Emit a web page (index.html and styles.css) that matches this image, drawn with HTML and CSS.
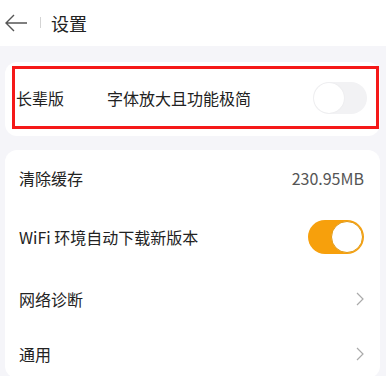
FILE: index.html
```html
<!DOCTYPE html>
<html lang="zh">
<head>
    <meta charset="UTF-8">
    <meta name="viewport" content="width=device-width, initial-scale=1.0">
    <title>设置</title>
    <link rel="stylesheet" href="styles.css">
</head>
<body>
    <div class="header">
        <svg class="back" width="24" height="18" viewBox="0 0 24 18">
            <path d="M10 1 L2 9 L10 17 M2 9 H23" fill="none" stroke="#555" stroke-width="1.4"/>
        </svg>
        <span class="sep"></span>
        <span class="title">设置</span>
    </div>

    <div class="page">
        <div class="card card-elder">
            <div class="elder-row">
                <span class="elder-name">长辈版</span>
                <span class="elder-desc">字体放大且功能极简</span>
                <span class="switch"><span class="knob"></span></span>
            </div>
        </div>

        <div class="card">
            <div class="row row-first">
                <span>清除缓存</span>
                <span class="value">230.95MB</span>
            </div>
            <div class="row">
                <span>WiFi 环境自动下载新版本</span>
                <span class="switch on"><span class="knob"></span></span>
            </div>
            <div class="row">
                <span>网络诊断</span>
                <svg class="chevron" width="8" height="14" viewBox="0 0 8 14">
                    <path d="M1 1 L7 7 L1 13" fill="none" stroke="#aaa" stroke-width="1.2"/>
                </svg>
            </div>
            <div class="row row-last">
                <span>通用</span>
                <svg class="chevron" width="8" height="14" viewBox="0 0 8 14">
                    <path d="M1 1 L7 7 L1 13" fill="none" stroke="#aaa" stroke-width="1.2"/>
                </svg>
            </div>
        </div>
    </div>
</body>
</html>
```

FILE: styles.css
```css
body {
    margin: 0;
    background-color: #f5f5f9;
    font-family: "Noto Sans CJK SC", "Noto Sans", sans-serif;
    color: #222;
    height: 376px;
    overflow: hidden;
}
.header {
    height: 45px;
    background-color: white;
    display: flex;
    align-items: center;
    padding-left: 4px;
    padding-bottom: 1px;
}
.back {
    display: block;
}
.sep {
    width: 1px;
    height: 11px;
    background-color: #d4d4d4;
    margin-left: 12px;
    margin-right: 10px;
}
.title {
    font-size: 18px;
    color: #222;
}
.page {
    padding: 0 6px 0 5px;
}
.card {
    background-color: white;
    border-radius: 12px;
    padding: 0 16px 0 14px;
    margin-top: 14px;
}
.card-elder {
    margin-top: 16px;
    padding: 4px 1px 7px 7px;
}
.elder-row {
    height: 57px;
    border: 3px solid #f51818;
    display: flex;
    align-items: center;
    font-size: 16px;
    padding: 0 9px 0 1px;
}
.elder-name {
    width: 91px;
}
.elder-desc {
    flex: 1;
}
.switch {
    width: 54px;
    height: 32px;
    border-radius: 16px;
    background-color: #f2f2f4;
    display: flex;
    align-items: center;
    box-sizing: border-box;
}
.switch .knob {
    width: 30px;
    height: 30px;
    border-radius: 50%;
    background-color: white;
    box-shadow: 0 0 2px rgba(0,0,0,0.06);
    margin-left: 1px;
}
.switch.on {
    width: 56px;
    height: 34px;
    border-radius: 17px;
    background-color: #f7a00c;
    justify-content: flex-end;
}
.switch.on .knob {
    width: 30px;
    height: 30px;
    border: 1.5px solid #e29a14;
    box-shadow: none;
    margin-right: 1px;
}
.row {
    height: 62px;
    display: flex;
    align-items: center;
    justify-content: space-between;
    font-size: 16px;
}
.row-first {
    height: 56px;
}
.row-last {
    height: 48px;
}
.value {
    color: #555;
}
.chevron {
    display: block;
}
```
